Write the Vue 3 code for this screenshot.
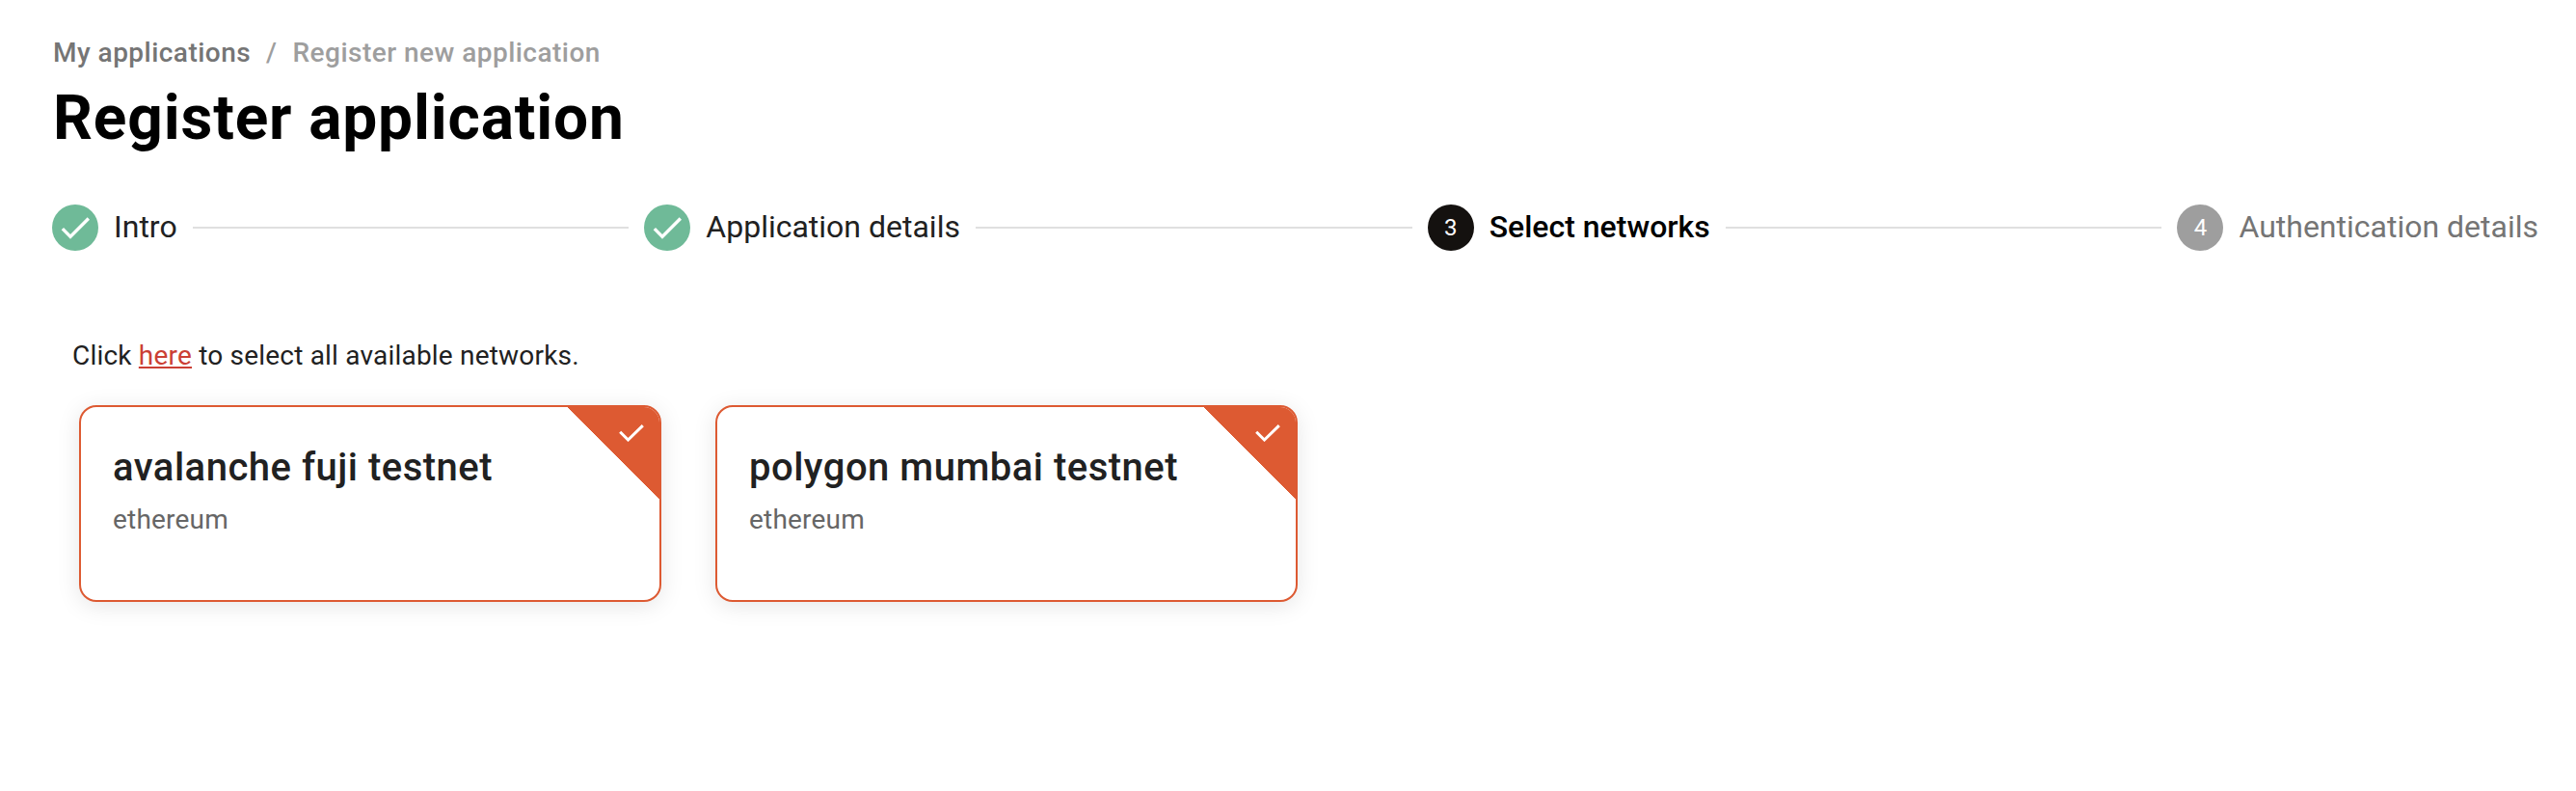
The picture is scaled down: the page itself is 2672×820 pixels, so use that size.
<script setup>
const steps = [
  { n: 1, label: 'Intro', state: 'done' },
  { n: 2, label: 'Application details', state: 'done' },
  { n: 3, label: 'Select networks', state: 'active' },
  { n: 4, label: 'Authentication details', state: 'todo' },
]
const networks = [
  { name: 'avalanche fuji testnet', family: 'ethereum' },
  { name: 'polygon mumbai testnet', family: 'ethereum' },
]
</script>

<template>
  <main class="page">
    <nav class="crumbs">
      <a class="crumb">My applications</a>
      <span class="sep">/</span>
      <span class="current">Register new application</span>
    </nav>
    <h1 class="title">Register application</h1>

    <div class="stepper">
      <template v-for="(s, i) in steps" :key="s.n">
        <span v-if="i" class="line"></span>
        <div class="step" :class="s.state">
          <span class="badge">
            <svg v-if="s.state === 'done'" class="badge-check" viewBox="0 0 24 24">
              <path d="M9 16.17L4.83 12l-1.42 1.41L9 19 21 7l-1.41-1.41z" fill="#fff" />
            </svg>
            <template v-else>{{ s.n }}</template>
          </span>
          <span class="label">{{ s.label }}</span>
        </div>
      </template>
    </div>

    <p class="hint">Click <a class="link">here</a> to select all available networks.</p>

    <div class="cards">
      <article v-for="n in networks" :key="n.name" class="card">
        <h2 class="name">{{ n.name }}</h2>
        <p class="family">{{ n.family }}</p>
        <div class="corner"></div>
        <svg class="tick" viewBox="0 0 26 18">
          <path d="M1.2 7.8L9.5 16L24.8 1.2" fill="none" stroke="#fff" stroke-width="3" />
        </svg>
      </article>
    </div>
  </main>
</template>

<style>
body {
  margin: 0;
  background: #fff;
}
</style>

<style scoped>
.page {
  box-sizing: border-box;
  width: 2672px;
  height: 820px;
  padding: 35px 39px 0 54px;
  overflow: hidden;
  font-family: Roboto, "Liberation Sans", sans-serif;
  color: #212121;
}
.crumbs {
  display: flex;
  gap: 16px;
  padding-left: 1px;
  font-size: 28px;
  line-height: 40px;
  font-weight: 500;
  letter-spacing: 0.47px;
  color: #9e9e9e;
}
.crumb {
  color: #757575;
}
.title {
  margin: 10px 0 0 1px;
  font-size: 64px;
  line-height: 76px;
  font-weight: 700;
  letter-spacing: 0.85px;
  color: #000;
}
.stepper {
  display: flex;
  align-items: center;
  gap: 16px;
  margin-top: 51px;
}
.step {
  display: flex;
  align-items: center;
  gap: 16px;
  white-space: nowrap;
}
.line {
  flex: 1;
  height: 2px;
  background: #e0e0e0;
}
.badge {
  display: flex;
  align-items: center;
  justify-content: center;
  box-sizing: border-box;
  width: 48px;
  height: 48px;
  padding-bottom: 1px;
  border-radius: 50%;
  background: #9e9e9e;
  color: #fff;
  font-size: 24px;
}
.badge-check {
  width: 40px;
  height: 40px;
}
.done .badge {
  padding-bottom: 0;
  background: #6fba98;
}
.active .badge {
  background: #14110f;
}
.label {
  padding-bottom: 2px;
  font-size: 32px;
  line-height: 46px;
}
.active .label {
  font-weight: 500;
  color: #000;
}
.todo .label {
  color: #757575;
}
.hint {
  margin: 89px 0 0 21px;
  font-size: 28px;
  line-height: 40px;
  letter-spacing: 0.2px;
}
.link {
  color: #cb3f35;
  text-decoration: underline;
}
.cards {
  display: flex;
  gap: 56px;
  margin: 31px 0 0 28px;
}
.card {
  position: relative;
  box-sizing: border-box;
  width: 604px;
  height: 204px;
  padding: 37px 32px 0 33px;
  border: 2px solid #dd5a32;
  border-radius: 18px;
  background: #fff;
  box-shadow: 0 4px 24px rgba(0, 0, 0, 0.1);
}
.name {
  margin: 0;
  font-size: 40px;
  line-height: 52px;
  font-weight: 500;
  letter-spacing: 0.5px;
}
.family {
  margin: 8px 0 0;
  font-size: 28px;
  line-height: 40px;
  letter-spacing: 0.2px;
  color: #666;
}
.corner {
  position: absolute;
  top: 0;
  right: 0;
  width: 96px;
  height: 96px;
  border-top-right-radius: 16px;
  background: linear-gradient(45deg, transparent 50%, #dd5a32 50.5%);
}
.tick {
  position: absolute;
  top: 18px;
  right: 16px;
  width: 26px;
  height: 18px;
}
</style>
